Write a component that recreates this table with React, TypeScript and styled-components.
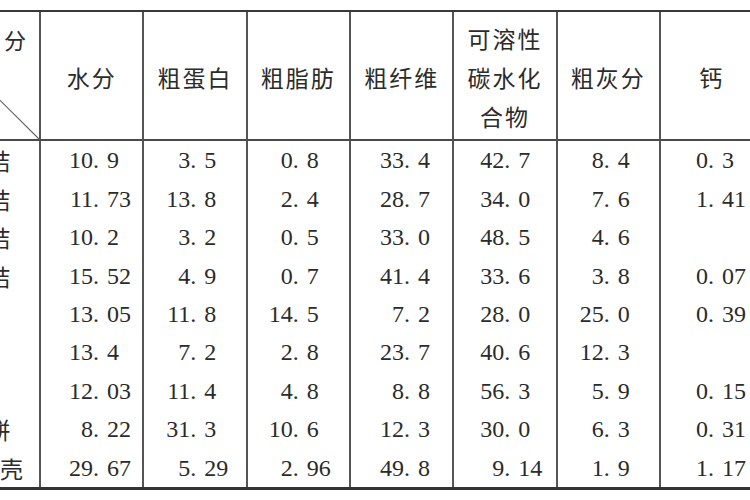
import React from "react";
import styled, { createGlobalStyle } from "styled-components";

const GlobalStyle = createGlobalStyle`
  html, body {
    margin: 0;
    padding: 0;
    background: #fff;
  }
  * {
    box-sizing: border-box;
  }
`;

type Row = {
  name: string;
  values: string[];
};

const headers = ["水分", "粗蛋白", "粗脂肪", "粗纤维", "可溶性\n碳水化\n合物", "粗灰分", "钙"];

// padding before the integer part, per column, so the points sit where the print has them
const shifts = [28, 22, 21, 29, 26, 22, 23];

const rows: Row[] = [
  { name: "玉米秸", values: ["10.9", "3.5", "0.8", "33.4", "42.7", "8.4", "0.3"] },
  { name: "小麦秸", values: ["11.73", "13.8", "2.4", "28.7", "34.0", "7.6", "1.41"] },
  { name: "大麦秸", values: ["10.2", "3.2", "0.5", "33.0", "48.5", "4.6", ""] },
  { name: "燕麦秸", values: ["15.52", "4.9", "0.7", "41.4", "33.6", "3.8", "0.07"] },
  { name: "米糠", values: ["13.05", "11.8", "14.5", "7.2", "28.0", "25.0", "0.39"] },
  { name: "稻糠", values: ["13.4", "7.2", "2.8", "23.7", "40.6", "12.3", ""] },
  { name: "麦麸", values: ["12.03", "11.4", "4.8", "8.8", "56.3", "5.9", "0.15"] },
  { name: "大豆饼", values: ["8.22", "31.3", "10.6", "12.3", "30.0", "6.3", "0.31"] },
  { name: "葵花籽壳", values: ["29.67", "5.29", "2.96", "49.8", "9.14", "1.9", "1.17"] },
];

const Page = styled.div`
  width: 750px;
  height: 500px;
  overflow: hidden;
  padding-top: 10px;
  background: #fff;
  color: #2b2b2b;
`;

const Grid = styled.div`
  display: grid;
  grid-template-columns: 128px repeat(7, 103.33px);
  grid-template-rows: 129px repeat(9, 38.44px);
  width: max-content;
  margin-left: -89px;
  border-top: 2px solid #3a3a3a;
  border-bottom: 3px solid #333;
`;

const CornerCell = styled.div`
  display: flex;
  flex-direction: column;
  justify-content: space-between;
  padding: 14px 13px 8px 10px;
  border-bottom: 2px solid #4a4a4a;
  background: linear-gradient(
    to top right,
    transparent calc(50% - 1px),
    #555 50%,
    transparent calc(50% + 1px)
  );
  font-family: "Noto Sans CJK SC", sans-serif;
  font-size: 22px;
  line-height: 26px;
`;

const CornerLabel = styled.span<{ $side: "left" | "right" }>`
  align-self: ${(p) => (p.$side === "right" ? "flex-end" : "flex-start")};
  word-spacing: 6px;
  white-space: pre;
`;

const HeadCell = styled.div`
  display: flex;
  align-items: center;
  justify-content: center;
  padding-top: 4px;
  border-left: 2px solid #555;
  border-bottom: 2px solid #4a4a4a;
  font-family: "Noto Sans CJK SC", sans-serif;
  font-size: 23px;
  letter-spacing: 2px;
  line-height: 39px;
  text-align: center;
  white-space: pre-line;
`;

const LabelCell = styled.div`
  display: flex;
  align-items: center;
  justify-content: center;
  font-family: "Noto Sans CJK SC", sans-serif;
  font-size: 23px;
  letter-spacing: 2px;
`;

const NumCell = styled.div<{ $shift: number }>`
  display: flex;
  align-items: center;
  padding-left: ${(p) => p.$shift}px;
  border-left: 2px solid #555;
  font-family: "Liberation Serif", "Times New Roman", serif;
  font-size: 24px;
  line-height: 1;
`;

const IntPart = styled.span`
  width: 24px;
  text-align: right;
  white-space: nowrap;
`;

const Dot = styled.span`
  width: 14px;
`;

const FracPart = styled.span`
  white-space: nowrap;
`;

const Num: React.FC<{ value: string }> = ({ value }) => {
  if (!value) return null;
  const [i, f] = value.split(".");
  return (
    <>
      <IntPart>{i}</IntPart>
      <Dot>.</Dot>
      <FracPart>{f}</FracPart>
    </>
  );
};

export default function App() {
  return (
    <Page>
      <GlobalStyle />
      <Grid>
        <CornerCell>
          <CornerLabel $side="right">成 分</CornerLabel>
          <CornerLabel $side="left">饲 料</CornerLabel>
        </CornerCell>
        {headers.map((h) => (
          <HeadCell key={h}>{h}</HeadCell>
        ))}
        {rows.map((r) => (
          <React.Fragment key={r.name}>
            <LabelCell>{r.name}</LabelCell>
            {r.values.map((v, i) => (
              <NumCell key={i} $shift={shifts[i]}>
                <Num value={v} />
              </NumCell>
            ))}
          </React.Fragment>
        ))}
      </Grid>
    </Page>
  );
}
